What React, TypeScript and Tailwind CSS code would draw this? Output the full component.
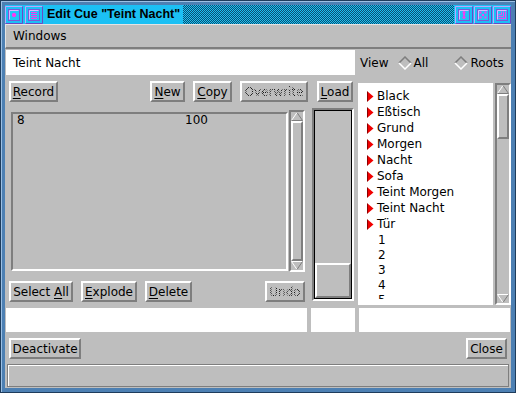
import React from 'react';

const raised = 'border-2 border-t-white border-l-white border-r-[#7e7e7e] border-b-[#7e7e7e]';
const sunken = 'border-2 border-t-[#7e7e7e] border-l-[#7e7e7e] border-r-white border-b-white';
const stipple =
  'bg-[repeating-conic-gradient(#1a1a1a_0_25%,transparent_0_50%)] bg-[length:2px_2px] bg-clip-text text-transparent';

type BtnProps = { pre?: string; mn?: string; post?: string; w: string; disabled?: boolean; cls?: string };

function Btn({ pre = '', mn = '', post = '', w, disabled, cls = '' }: BtnProps) {
  return (
    <div className={`h-[21px] shrink-0 flex items-center justify-center bg-[#bebebe] ${raised} ${w} ${cls}`}>
      <span className={disabled ? stipple : ''}>
        {pre}
        {mn && <span className="underline underline-offset-[2px]">{mn}</span>}
        {post}
      </span>
    </div>
  );
}

const TIcon = ({ kind }: { kind: string }) => (
  <svg width="18" height="18" viewBox="0 0 18 18" className="shrink-0">
    <rect x="0" y="0" width="18" height="18" fill="#1cc0f4" />
    <path d="M0.5 17.5V0.5H17.5" fill="none" stroke="#c0a4ff" />
    <path d="M0.5 17.5H17.5V0.5" fill="none" stroke="#6a48c8" />
    <rect x="3.5" y="3.5" width="11" height="11" fill="#22c4f6" stroke="#7a58d8" />
    <path d="M4.5 13.5V4.5H13.5" fill="none" stroke="#d6b8ff" />
    {kind === 'dot' && <path d="M7 9H11M9 7V11" stroke="#ff38f0" strokeWidth="2.5" />}
    {kind === 'menu' && (
      <path d="M6 6.5H12M6 8.5H12M6 10.5H12M6 12.5H12" stroke="#ff38f0" strokeWidth="1" />
    )}
    {kind === 'vert' && (
      <path d="M9 5V13M7.5 6.5H10.5M7.5 11.5H10.5M8 8.5H10" stroke="#ff38f0" strokeWidth="1.4" />
    )}
    {kind === 'x' && (
      <g fill="#ff38f0">
        <rect x="5.5" y="5.5" width="2" height="2" />
        <rect x="10.5" y="5.5" width="2" height="2" />
        <rect x="8" y="8" width="2" height="2" />
        <rect x="5.5" y="10.5" width="2" height="2" />
        <rect x="10.5" y="10.5" width="2" height="2" />
      </g>
    )}
    {kind === 'max' && (
      <path
        d="M5.5 12.5H12.5V5.5M5.5 10.5H10.5V5.5M5.5 8.5H8.5V5.5"
        fill="none"
        stroke="#ff38f0"
        strokeWidth="1"
      />
    )}
  </svg>
);

const Diamond = () => (
  <svg width="14" height="14" viewBox="0 0 14 14" className="shrink-0">
    <path d="M1 7L7 1L13 7" fill="none" stroke="#7e7e7e" strokeWidth="1.5" />
    <path d="M1 7L7 13L13 7" fill="none" stroke="#ffffff" strokeWidth="1.5" />
  </svg>
);

const UpArrow = () => (
  <svg width="12" height="9" viewBox="0 0 12 9" className="shrink-0">
    <polygon points="6,0.5 11.5,8.5 0.5,8.5" fill="#bebebe" />
    <path d="M0.5 8.5L6 0.5" stroke="#ffffff" fill="none" />
    <path d="M6 0.5L11.5 8.5H0.5" stroke="#7e7e7e" fill="none" />
  </svg>
);

const DownArrow = () => (
  <svg width="12" height="9" viewBox="0 0 12 9" className="shrink-0">
    <polygon points="0.5,0.5 11.5,0.5 6,8.5" fill="#bebebe" />
    <path d="M6 8.5L0.5 0.5H11.5" stroke="#ffffff" fill="none" />
    <path d="M11.5 0.5L6 8.5" stroke="#7e7e7e" fill="none" />
  </svg>
);

const RedTri = () => (
  <svg width="7" height="11" viewBox="0 0 7 11" className="shrink-0">
    <polygon points="0.5,0.5 6.5,5.5 0.5,10.5" fill="#f00000" />
    <path d="M0.5 0.5V10.5" stroke="#8a0000" />
  </svg>
);

const cues = ['Black', 'Eßtisch', 'Grund', 'Morgen', 'Nacht', 'Sofa', 'Teint Morgen', 'Teint Nacht', 'Tür'];
const nums = ['1', '2', '3', '4', '5'];

export default function App() {
  return (
    <div className="w-[516px] h-[393px] bg-[#4d80b3] border border-[#1e3c5c] shadow-[inset_1px_1px_0_#9cc0e4] p-[4px] flex flex-col font-['DejaVu_Sans',sans-serif] text-[12px] leading-none text-black">
      {/* title bar */}
      <div className="h-[19px] shrink-0 flex items-center bg-[#1cc0f4]">
        <TIcon kind="dot" />
        <div className="ml-[2px]">
          <TIcon kind="menu" />
        </div>
        <span className="ml-[4px] pr-[3px] font-['Liberation_Sans',sans-serif] font-bold text-[12.5px] whitespace-nowrap">
          Edit Cue "Teint Nacht"
        </span>
        <div className="flex-1 self-stretch bg-[repeating-conic-gradient(#0d4f70_0_25%,#1cc0f4_0_50%)] bg-[length:2px_2px]" />
        <div className="flex gap-[1px] ml-[1px]">
          <TIcon kind="vert" />
          <TIcon kind="x" />
          <TIcon kind="max" />
        </div>
      </div>

      <div className="flex-1 bg-[#bebebe] flex flex-col">
        {/* menu bar */}
        <div className="h-[25px] shrink-0 flex items-center border-t border-l border-t-[#e4e4e4] border-l-[#e4e4e4] border-b-2 border-b-[#7e7e7e] pl-[7px]">
          Windows
        </div>

        {/* name + view */}
        <div className="mt-[1px] h-[25px] flex items-center">
          <div className="ml-[1px] w-[349px] h-full bg-white flex items-center pl-[7px]">Teint Nacht</div>
          <span className="ml-[5px]">View</span>
          <div className="ml-[10px] flex items-center gap-[1px]">
            <Diamond />
            <span>All</span>
          </div>
          <div className="ml-[26px] flex items-center gap-[2px]">
            <Diamond />
            <span>Roots</span>
          </div>
        </div>

        {/* main area */}
        <div className="mt-[6px] h-[224px] flex items-start">
          {/* left column */}
          <div className="w-[303px] h-full flex flex-col">
            <div className="flex items-center justify-between pl-[4px]">
              <Btn mn="R" post="ecord" w="w-[49px]" />
              <div className="flex gap-[8px]">
                <Btn mn="N" post="ew" w="w-[35px]" />
                <Btn mn="C" post="opy" w="w-[39px]" />
                <Btn mn="O" post="verwrite" w="w-[68px]" disabled />
              </div>
            </div>
            <div className="mt-[8px] flex items-start">
              <div className={`ml-[6px] mt-[2px] w-[277px] h-[159px] ${sunken}`}>
                <div className="flex h-[12px] items-center pl-[4px]">
                  <span className="w-[168px]">8</span>
                  <span>100</span>
                </div>
              </div>
              <div className={`ml-[1px] w-[16px] h-[162px] flex flex-col ${sunken}`}>
                <UpArrow />
                <div className={`flex-1 ${raised}`} />
                <DownArrow />
              </div>
            </div>
            <div className="mt-[9px] flex items-center gap-[8px] pl-[4px] pr-[3px]">
              <Btn pre="Select " mn="A" post="ll" w="w-[64px]" />
              <Btn mn="E" post="xplode" w="w-[56px]" />
              <Btn mn="D" post="elete" w="w-[47px]" />
              <Btn mn="U" post="ndo" w="w-[40px]" disabled cls="ml-auto" />
            </div>
          </div>

          {/* fader column */}
          <div className="ml-[3px] w-[44px] flex flex-col">
            <Btn mn="L" post="oad" w="w-[36px]" cls="ml-[6px]" />
            <div className={`mt-[6px] ml-[1px] w-[42px] h-[193px] ${sunken}`}>
              <div className="w-full h-full border border-black flex flex-col justify-end">
                <div className={`h-[35px] ${raised}`} />
              </div>
            </div>
          </div>

          {/* cue list */}
          <div className="ml-[3px] mt-[2px] w-[153px] h-[222px] flex">
            <div className="w-[135px] h-full bg-white pt-[5px] pb-[6px]">
              <div className="h-full overflow-hidden">
                {cues.map((c) => (
                  <div key={c} className="h-[16px] flex items-center pl-[9px]">
                    <RedTri />
                    <span className="ml-[3px] whitespace-nowrap">{c}</span>
                  </div>
                ))}
                {nums.map((n) => (
                  <div key={n} className="h-[15px] flex items-center pl-[20px]">
                    {n}
                  </div>
                ))}
              </div>
            </div>
            <div className={`ml-[2px] w-[16px] h-full flex flex-col ${sunken}`}>
              <UpArrow />
              <div className={`h-[45px] ${raised}`} />
              <div className="flex-1" />
              <DownArrow />
            </div>
          </div>
        </div>

        {/* message fields */}
        <div className="mt-[3px] h-[24px] flex">
          <div className="ml-[1px] w-[301px] bg-white" />
          <div className="ml-[4px] w-[44px] bg-white" />
          <div className="ml-[4px] w-[151px] bg-white" />
        </div>

        {/* bottom buttons */}
        <div className="mt-[6px] h-[21px] flex items-center justify-between pl-[4px] pr-[4px]">
          <Btn pre="Deactivate" w="w-[72px]" />
          <Btn pre="Close" w="w-[41px]" />
        </div>

        {/* status bar */}
        <div className="mt-[5px] mx-[2px] h-[23px] border border-[#7e7e7e] shadow-[inset_1px_1px_0_#ffffff]" />
      </div>
    </div>
  );
}
